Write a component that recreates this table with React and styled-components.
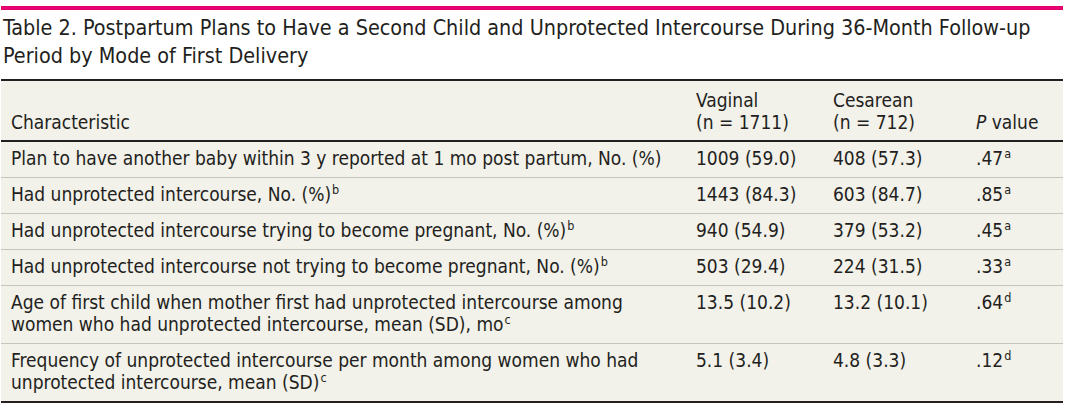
import React from "react";
import styled, { createGlobalStyle } from "styled-components";

const GlobalStyle = createGlobalStyle`
  html, body { margin: 0; padding: 0; background: #ffffff; }
  body {
    font-family: "DejaVu Sans Condensed", "DejaVu Sans", sans-serif;
    font-stretch: condensed;
    color: #231f20;
  }
`;

const Page = styled.div`
  width: 1062px;
  padding: 6px 0 0 1px;
`;

const Accent = styled.div`
  height: 4px;
  background: #e6006f;
`;

const Title = styled.h1`
  margin: 4px 0 9px 2px;
  font-size: 21.4px;
  line-height: 28px;
  font-weight: normal;
  color: #231f20;
`;

const Table = styled.div`
  display: grid;
  grid-template-columns: 685px 137px 143px 1fr;
  background: #f2f1ea;
  border-top: 2px solid #231f20;
  border-bottom: 2px solid #231f20;
  font-size: 19px;
  line-height: 22px;
`;

const HeadCell = styled.div`
  display: flex;
  flex-direction: column;
  justify-content: flex-end;
  padding: 8px 10px 7px;
  border-bottom: 2px solid #231f20;
`;

const Cell = styled.div`
  padding: 5px 10px 8px;
  border-bottom: ${(p) => (p.$last ? "none" : "1px solid #c6c5bd")};
`;

const Sup = styled.sup`
  font-size: 12.5px;
  line-height: 0;
  vertical-align: 7px;
  margin-left: 1px;
`;

const Italic = styled.i`
  font-style: oblique;
`;

const rows = [
  {
    label: ["Plan to have another baby within 3 y reported at 1 mo post partum, No. (%)"],
    sup: null,
    v: "1009 (59.0)",
    c: "408 (57.3)",
    p: ".47",
    ps: "a",
  },
  {
    label: ["Had unprotected intercourse, No. (%)"],
    sup: "b",
    v: "1443 (84.3)",
    c: "603 (84.7)",
    p: ".85",
    ps: "a",
  },
  {
    label: ["Had unprotected intercourse trying to become pregnant, No. (%)"],
    sup: "b",
    v: "940 (54.9)",
    c: "379 (53.2)",
    p: ".45",
    ps: "a",
  },
  {
    label: ["Had unprotected intercourse not trying to become pregnant, No. (%)"],
    sup: "b",
    v: "503 (29.4)",
    c: "224 (31.5)",
    p: ".33",
    ps: "a",
  },
  {
    label: [
      "Age of first child when mother first had unprotected intercourse among",
      "women who had unprotected intercourse, mean (SD), mo",
    ],
    sup: "c",
    v: "13.5 (10.2)",
    c: "13.2 (10.1)",
    p: ".64",
    ps: "d",
  },
  {
    label: [
      "Frequency of unprotected intercourse per month among women who had",
      "unprotected intercourse, mean (SD)",
    ],
    sup: "c",
    v: "5.1 (3.4)",
    c: "4.8 (3.3)",
    p: ".12",
    ps: "d",
  },
];

export default function App() {
  return (
    <>
      <GlobalStyle />
      <Page>
        <Accent />
        <Title>
          Table 2. Postpartum Plans to Have a Second Child and Unprotected Intercourse During 36-Month Follow-up
          <br />
          Period by Mode of First Delivery
        </Title>
        <Table>
          <HeadCell>Characteristic</HeadCell>
          <HeadCell>
            <span>Vaginal</span>
            <span>(n = 1711)</span>
          </HeadCell>
          <HeadCell>
            <span>Cesarean</span>
            <span>(n = 712)</span>
          </HeadCell>
          <HeadCell>
            <span>
              <Italic>P</Italic> value
            </span>
          </HeadCell>
          {rows.map((r, i) => {
            const last = i === rows.length - 1;
            return (
              <React.Fragment key={i}>
                <Cell $last={last}>
                  {r.label.map((l, j) => (
                    <React.Fragment key={j}>
                      {j > 0 && <br />}
                      {l}
                    </React.Fragment>
                  ))}
                  {r.sup && <Sup>{r.sup}</Sup>}
                </Cell>
                <Cell $last={last}>{r.v}</Cell>
                <Cell $last={last}>{r.c}</Cell>
                <Cell $last={last}>
                  {r.p}
                  <Sup>{r.ps}</Sup>
                </Cell>
              </React.Fragment>
            );
          })}
        </Table>
      </Page>
    </>
  );
}
